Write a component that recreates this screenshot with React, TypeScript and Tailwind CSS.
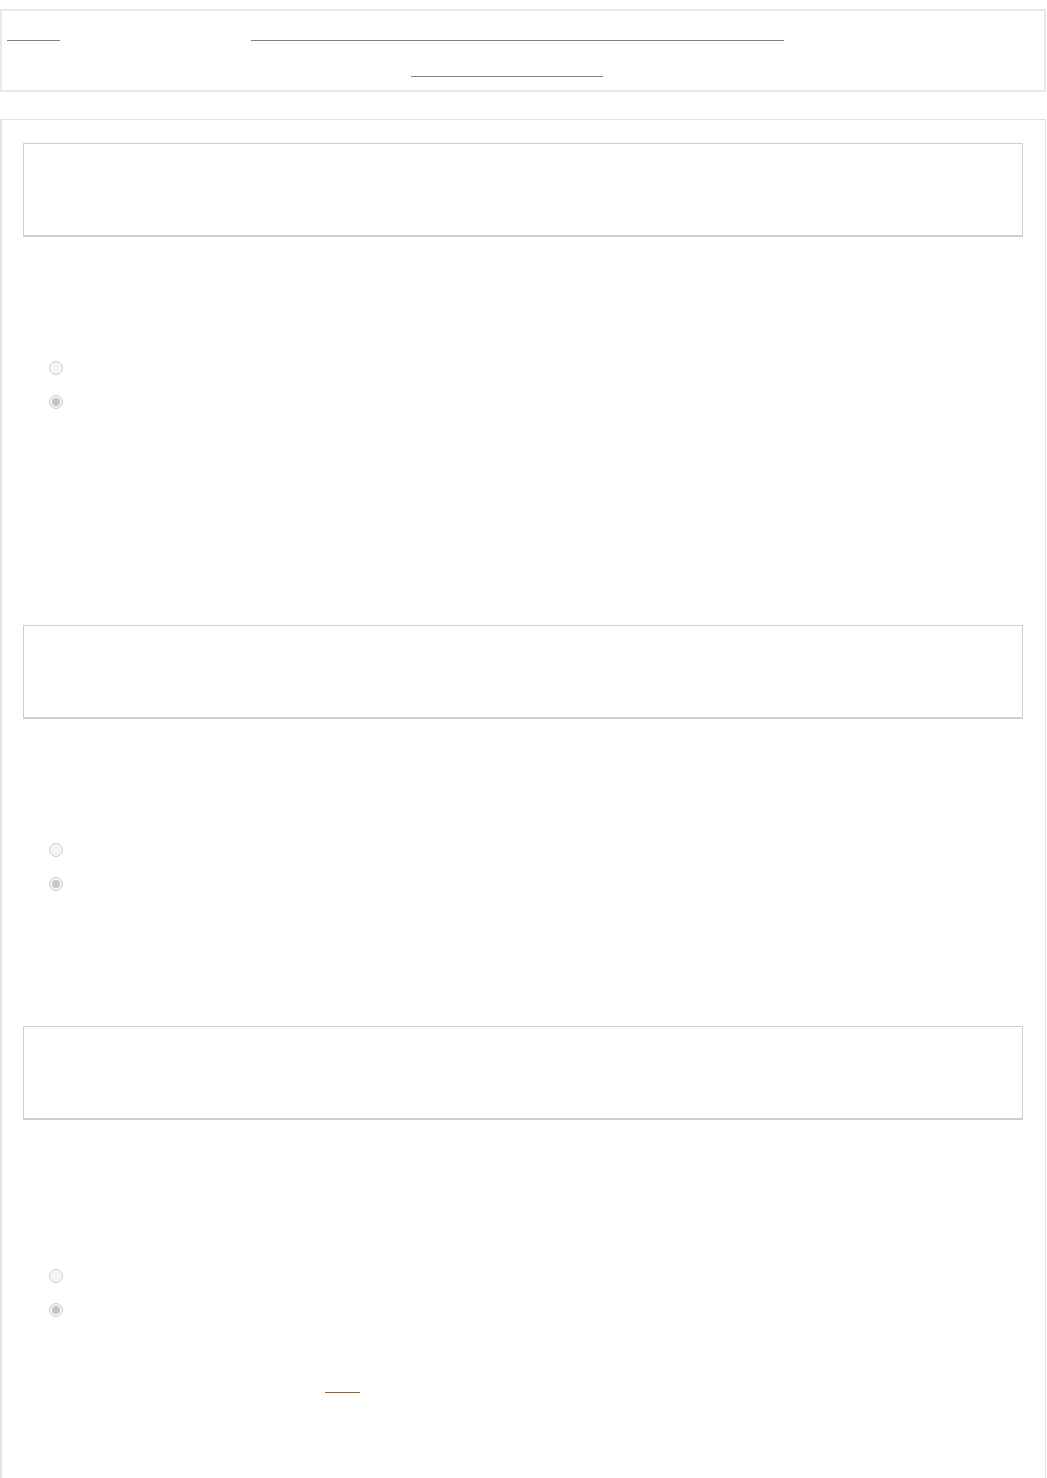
const Underline = ({ left, top, w, color = 'border-[#808080]' }: { left: number; top: number; w: number; color?: string }) => (
  <div className={`absolute h-[1px] border-b ${color}`} style={{ left, top, width: w }} />
);

const Radio = ({ checked = false }: { checked?: boolean }) => (
  <span className="flex h-[14px] w-[14px] items-center justify-center rounded-full border border-[#cdcdcd] bg-[#f4f4f4]">
    {checked && <span className="h-[8px] w-[8px] rounded-full bg-[#c6c6c6]" />}
  </span>
);

const Question = ({ gapTop, gapBottom }: { gapTop: number; gapBottom: number }) => (
  <div>
    <div className="h-[94px] border border-b-2 border-[#cbd0d8] bg-white" />
    <div style={{ height: gapTop }} />
    <div className="flex flex-col gap-[20px] pl-[26px]">
      <Radio />
      <Radio checked />
    </div>
    <div style={{ height: gapBottom }} />
  </div>
);

export default function App() {
  return (
    <div className="min-h-[1478px] bg-white font-['Liberation_Sans',sans-serif] text-sm text-white">
      <div className="h-[9px]" />
      <div className="relative mr-[1px] h-[83px] border-2 border-[#e6e9ed]">
        <Underline left={5} top={29} w={53} />
        <Underline left={249} top={29} w={533} />
        <Underline left={409} top={65} w={192} />
      </div>
      <div className="h-[27px]" />
      <div className="mr-[1px] min-h-[1400px] border border-l-2 border-[#e3e3e3] pb-[40px] pl-[21px] pr-[22px] pt-[23px]">
        <Question gapTop={124} gapBottom={216} />
        <Question gapTop={124} gapBottom={135} />
        <Question gapTop={149} gapBottom={0} />
        <div className="relative h-[90px]">
          <Underline left={302} top={75} w={35} color="border-[#9a6224]" />
        </div>
      </div>
    </div>
  );
}
